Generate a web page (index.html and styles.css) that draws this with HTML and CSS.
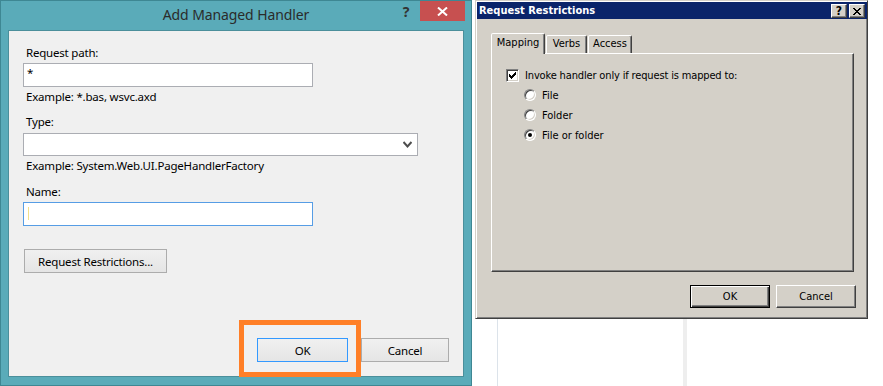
FILE: index.html
```html
<!DOCTYPE html>
<html lang="en">
<head>
    <meta charset="UTF-8">
    <meta name="viewport" content="width=device-width, initial-scale=1.0">
    <title>Add Managed Handler</title>
    <link rel="stylesheet" href="styles.css">
</head>
<body>
<div class="desk">

    <!-- Add Managed Handler (windows 8 frame) -->
    <div class="win8">
        <div class="win8-title">
            <span class="win8-caption">Add Managed Handler</span>
            <div class="win8-ctrls">
                <span class="win8-help">?</span>
                <span class="win8-close">
                    <svg width="11" height="9" viewBox="0 0 11 9"><path d="M1 0.5 L10 8.5 M10 0.5 L1 8.5" stroke="#fff" stroke-width="2"/></svg>
                </span>
            </div>
        </div>

        <div class="win8-body">
            <div class="lbl">Request path:</div>
            <div class="field">*</div>
            <div class="hint">Example: *.bas, wsvc.axd</div>

            <div class="lbl lbl-gap">Type:</div>
            <div class="combo">
                <svg width="9" height="7" viewBox="0 0 9 7"><path d="M0.5 1 L4.5 5.5 L8.5 1" fill="none" stroke="#4d4d4d" stroke-width="2"/></svg>
            </div>
            <div class="hint">Example: System.Web.UI.PageHandlerFactory</div>

            <div class="lbl lbl-name">Name:</div>
            <div class="field field-focus"><span class="caret"></span></div>

            <button class="btn8 btn-restrict">Request Restrictions...</button>

            <div class="win8-foot">
                <button class="btn8 btn-ok">OK</button>
                <button class="btn8 btn-cancel">Cancel</button>
            </div>

            <!-- orange highlight drawn over the OK button -->
            <div class="mark"></div>
        </div>
    </div>

    <!-- Request Restrictions (classic frame) -->
    <div class="side">
        <div class="classic">
            <div class="classic-title">
                <span class="classic-caption">Request Restrictions</span>
                <div class="classic-ctrls">
                    <span class="cbtn cbtn-help">?</span>
                    <span class="cbtn">
                        <svg width="8" height="7" viewBox="0 0 8 7"><path d="M0 0h2v1h-2z M6 0h2v1h-2z M1 1h2v1h-2z M5 1h2v1h-2z M2 2h4v1h-4z M3 3h2v1h-2z M2 4h4v1h-4z M1 5h2v1h-2z M5 5h2v1h-2z M0 6h2v1h-2z M6 6h2v1h-2z" fill="#000"/></svg>
                    </span>
                </div>
            </div>

            <div class="classic-body">
                <div class="tabs">
                    <span class="tab tab-on tab-map">Mapping</span>
                    <span class="tab tab-verbs">Verbs</span>
                    <span class="tab tab-access">Access</span>
                </div>
                <div class="panel">
                    <div class="chk-row">
                        <span class="chk">
                            <svg width="7" height="7" viewBox="0 0 7 7"><path d="M0 2h1v3h-1z M1 3h1v3h-1z M2 4h1v3h-1z M3 3h1v3h-1z M4 2h1v3h-1z M5 1h1v3h-1z M6 0h1v3h-1z" fill="#000"/></svg>
                        </span>
                        <span>Invoke handler only if request is mapped to:</span>
                    </div>
                    <div class="radios">
                        <div class="radio-row"><span class="radio"></span><span>File</span></div>
                        <div class="radio-row"><span class="radio"></span><span>Folder</span></div>
                        <div class="radio-row"><span class="radio radio-on"></span><span>File or folder</span></div>
                    </div>
                </div>
                <div class="classic-foot">
                    <button class="cls-btn cls-default">OK</button>
                    <button class="cls-btn">Cancel</button>
                </div>
            </div>
        </div>
        <div class="behind">
            <div class="behind-col"></div>
            <div class="behind-band"></div>
        </div>
    </div>

</div>
</body>
</html>
```

FILE: styles.css
```css
* { box-sizing: border-box; }

body
{
    margin: 0; background: #ffffff;
    width: 883px; height: 386px; overflow: hidden;
}

.desk { display: flex; align-items: flex-start; gap: 3px; }

/* ---------- windows 8 dialog ---------- */

.win8
{
    width: 472px; height: 386px;
    background: #5aabb9; border: 1px solid #3e8793;
    padding: 0 7px 8px 7px;
    display: flex; flex-direction: column;
    font-family: "Noto Sans", "Open Sans", sans-serif;
}

.win8-title
{
    height: 29px; margin: 0 -7px;
    display: grid; grid-template-columns: 1fr auto 1fr;
}

.win8-caption
{
    grid-column: 2; align-self: center;
    font-size: 14px; letter-spacing: -0.1px; line-height: 20px; color: #2b2b2b;
    padding-bottom: 1px;
}

.win8-ctrls { grid-column: 3; justify-self: end; display: flex; align-items: flex-start; }

.win8-help
{
    width: 14px; margin: 3px 7px 0 0;
    font-size: 14px; font-weight: bold; line-height: 16px;
    color: #333333; text-align: center;
}

.win8-close
{
    width: 45px; height: 20px; margin-right: 6px;
    background: #c75050;
    display: flex; align-items: center; justify-content: center;
}

.win8-body
{
    flex: 1; position: relative;
    background: #f0f0f0; border: 1px solid #4b8f9b;
    padding: 14px;
    display: flex; flex-direction: column; align-items: flex-start;
    font-size: 11.5px; letter-spacing: -0.2px; color: #000000;
}

.lbl { line-height: 16px; margin-left: 3px; }
.lbl-gap { margin-top: 9px; }
.lbl-name { margin-top: 10px; }

.hint { line-height: 16px; margin: 2px 0 0 3px; }

.field
{
    width: 290px; height: 24px; margin-top: 2px;
    background: #ffffff; border: 1px solid #abadb3;
    padding-left: 3px; line-height: 18px;
}

.field-focus { border-color: #569de5; padding: 4px 0 0 4px; }

.caret { display: block; width: 1px; height: 13px; background: #f2e08a; }

.combo
{
    width: 395px; height: 23px; margin-top: 3px;
    background: #ffffff; border: 1px solid #abadb3;
    display: flex; align-items: center; justify-content: flex-end;
    padding-right: 5px;
}

.btn8
{
    height: 24px; padding: 0;
    background: linear-gradient(#f0f0f0, #e5e5e5);
    border: 1px solid #acacac;
    font-family: "Noto Sans", "Open Sans", sans-serif;
    font-size: 11.5px; letter-spacing: -0.2px; color: #000000;
}

.btn-restrict { width: 143px; margin: 23px 0 0 1px; }

.win8-foot
{
    margin-top: auto; align-self: stretch;
    display: flex; justify-content: flex-end; gap: 13px;
}

.btn-ok { width: 91px; border-color: #3399ff; }
.btn-cancel { width: 88px; }

.mark
{
    position: absolute; left: 230px; top: 289px;
    width: 122px; height: 57px;
    border: 5px solid #ff7f27;
}

/* ---------- classic dialog ---------- */

.side { display: flex; flex-direction: column; }

.classic
{
    width: 393px; height: 319px;
    background: #d4d0c8;
    border: 1px solid; border-color: #d4d0c8 #404040 #404040 #d4d0c8;
    box-shadow: inset 1px 1px #ffffff, inset -1px -1px #808080;
    padding: 1px 0 0 1px;
    font-family: "DejaVu Sans Condensed", "DejaVu Sans", sans-serif;
    font-size: 11px; color: #000000;
}

.classic-title
{
    height: 17px; background: #0a246a;
    display: flex; justify-content: space-between; align-items: flex-start;
}

.classic-caption
{
    color: #ffffff; font-weight: bold;
    line-height: 17px; padding-left: 2px;
}

.classic-ctrls { display: flex; gap: 2px; margin: 2px 2px 0 0; }

.cbtn
{
    width: 16px; height: 14px;
    background: #d4d0c8;
    border: 1px solid; border-color: #ffffff #404040 #404040 #ffffff;
    box-shadow: inset -1px -1px #808080;
    display: flex; align-items: center; justify-content: center;
}

.cbtn-help { font-weight: bold; font-size: 12px; line-height: 12px; }

.classic-body { padding: 14px 13px 0 14px; }

.tabs { height: 20px; display: flex; align-items: flex-end; }

.tab
{
    height: 18px; line-height: 16px; text-align: center;
    border: 1px solid; border-bottom: 0;
    border-color: #ffffff #404040 transparent #ffffff;
    border-radius: 2px 2px 0 0;
    box-shadow: inset -1px 0 #808080;
    background: #d4d0c8;
}

.tab-on
{
    height: 21px; margin-bottom: -1px; line-height: 18px;
    position: relative; z-index: 1;
}

.tab-map { width: 54px; }
.tab-verbs { width: 41px; margin-left: 1px; }
.tab-access { width: 44px; margin-left: 1px; }

.panel
{
    height: 219px;
    border: 1px solid; border-color: #ffffff #404040 #404040 #ffffff;
    box-shadow: inset -1px -1px #808080;
    padding: 14px;
}

.chk-row { display: flex; align-items: center; gap: 6px; height: 14px; letter-spacing: -0.15px; }

.chk
{
    width: 13px; height: 13px; background: #ffffff;
    border: 1px solid; border-color: #808080 #ffffff #ffffff #808080;
    box-shadow: inset 1px 1px #404040, inset -1px -1px #d4d0c8;
    display: flex; align-items: center; justify-content: center;
}

.radios { margin: 3px 0 0 18px; }

.radio-row { display: flex; align-items: center; gap: 6px; height: 20px; }

.radio
{
    width: 12px; height: 12px; border-radius: 50%;
    background: #ffffff;
    border: 1px solid; border-color: #808080 #ffffff #ffffff #808080;
    box-shadow: inset 1px 1px #404040, inset -1px -1px #d4d0c8;
    display: flex; align-items: center; justify-content: center;
}

.radio-on::after
{
    content: ""; width: 4px; height: 4px;
    border-radius: 50%; background: #000000;
}

.classic-foot
{
    margin: 13px -2px 0 0;
    display: flex; justify-content: flex-end; gap: 6px;
}

.cls-btn
{
    width: 80px; height: 23px; padding: 0;
    background: #d4d0c8;
    border: 1px solid; border-color: #ffffff #404040 #404040 #ffffff;
    box-shadow: inset -1px -1px #808080;
    font-family: "DejaVu Sans Condensed", "DejaVu Sans", sans-serif;
    font-size: 11px; color: #000000;
}

.cls-default
{
    border-color: #000000;
    box-shadow: inset 1px 1px #ffffff, inset -1px -1px #404040, inset -2px -2px #808080;
}

.behind { height: 67px; display: flex; padding-left: 22px; }
.behind-col { width: 186px; border-left: 1px solid #dce3ea; }
.behind-band { width: 4px; background: #eeeeee; }
```
